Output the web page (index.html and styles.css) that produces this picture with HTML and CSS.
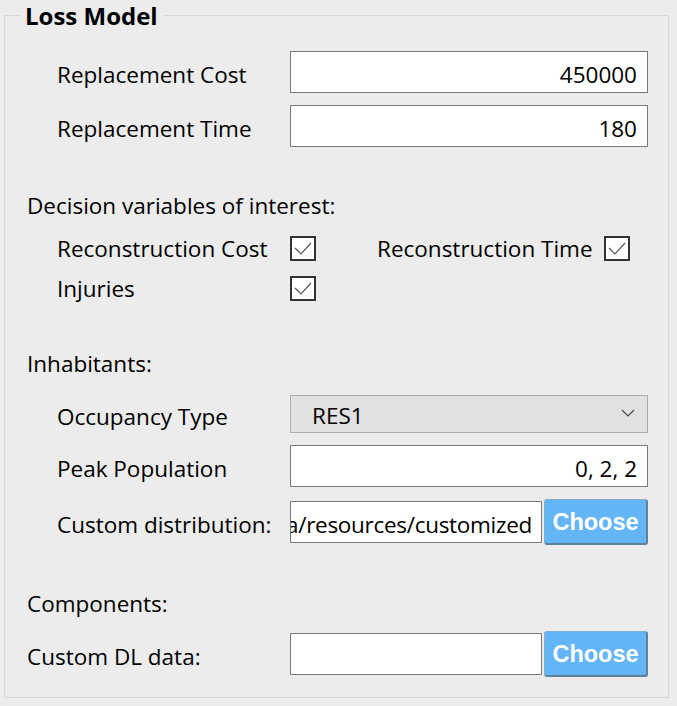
FILE: index.html
```html
<!DOCTYPE html>
<html>
<head>
<meta charset="utf-8">
<link rel="stylesheet" href="styles.css">
</head>
<body>
<div class="group">
  <div class="legend">Loss Model</div>
  <div class="row r1">
    <span class="lbl ind">Replacement Cost</span>
    <div class="field num">450000</div>
  </div>
  <div class="row r2">
    <span class="lbl ind">Replacement Time</span>
    <div class="field num">180</div>
  </div>
  <div class="head h-dec">Decision variables of interest:</div>
  <div class="checks">
    <div class="crow">
      <span class="clbl">Reconstruction Cost</span>
      <span class="cb"><svg width="22" height="21" viewBox="0 0 22 21"><polyline points="3,10 9,16 19,5" fill="none" stroke="#555" stroke-width="1.2"/></svg></span>
      <span class="clbl2">Reconstruction Time</span>
      <span class="cb"><svg width="22" height="21" viewBox="0 0 22 21"><polyline points="3,10 9,16 19,5" fill="none" stroke="#555" stroke-width="1.2"/></svg></span>
    </div>
    <div class="crow">
      <span class="clbl">Injuries</span>
      <span class="cb"><svg width="22" height="21" viewBox="0 0 22 21"><polyline points="3,10 9,16 19,5" fill="none" stroke="#555" stroke-width="1.2"/></svg></span>
    </div>
  </div>
  <div class="head h-inh">Inhabitants:</div>
  <div class="row r3">
    <span class="lbl ind">Occupancy Type</span>
    <div class="combo"><span>RES1</span><svg width="14" height="8" viewBox="0 0 14 8"><polyline points="1,1 7,7 13,1" fill="none" stroke="#444" stroke-width="1.1"/></svg></div>
  </div>
  <div class="row r4">
    <span class="lbl ind">Peak Population</span>
    <div class="field num">0, 2, 2</div>
  </div>
  <div class="row r5">
    <span class="lbl ind">Custom distribution:</span>
    <div class="field short path"><span>a/resources/customized</span></div>
    <button class="btn">Choose</button>
  </div>
  <div class="head h-comp">Components:</div>
  <div class="row r6">
    <span class="lbl">Custom DL data:</span>
    <div class="field short"></div>
    <button class="btn">Choose</button>
  </div>
</div>
</body>
</html>
```
FILE: styles.css
```css
html, body {
  margin: 0;
  padding: 0;
  background: #ececec;
}
body {
  font-family: "Open Sans", "Noto Sans", sans-serif;
  font-size: 22.5px;
  color: #000;
  width: 677px;
  height: 706px;
  overflow: hidden;
}
.group {
  margin: 15px 0 0 4px;
  width: 665px;
  height: 683px;
  border: 1px solid #d8d8d8;
  box-sizing: border-box;
}
.legend {
  margin: -13px 0 0 15px;
  padding: 0 5px;
  width: max-content;
  background: #ececec;
  font-weight: bold;
  font-size: 24px;
  line-height: 26px;
  height: 26px;
}
.row {
  display: flex;
  align-items: center;
  padding-left: 22px;
}
.lbl {
  width: 263px;
  flex: none;
  padding-top: 4px;
}
.lbl.ind {
  padding-left: 30px;
  width: 233px;
}
.field {
  width: 358px;
  height: 42px;
  box-sizing: border-box;
  border: 1px solid #7a7a7a;
  background: #fff;
  display: flex;
  align-items: center;
  padding: 4px 10px 0;
  white-space: nowrap;
  overflow: hidden;
  flex: none;
}
.field.num {
  justify-content: flex-end;
}
.field.short {
  width: 252px;
}
.field.path {
  justify-content: flex-end;
  padding: 4px 9px 0 0;
}
.field.path span {
  flex: none;
  letter-spacing: -0.3px;
}
.r1 { margin-top: 22px; }
.r2 { margin-top: 12px; }
.head {
  padding-left: 22px;
  line-height: 30px;
}
.h-dec { margin-top: 44px; }
.checks {
  padding-left: 52px;
  margin-top: 15px;
  display: flex;
  flex-direction: column;
  gap: 15px;
}
.crow {
  display: flex;
  align-items: center;
  height: 25px;
}
.clbl {
  width: 233px;
  flex: none;
}
.clbl2 {
  margin-left: 61px;
  width: 227px;
  flex: none;
}
.cb {
  width: 26px;
  height: 25px;
  box-sizing: border-box;
  border: 2px solid #333;
  background: #fff;
  display: flex;
  align-items: center;
  justify-content: center;
  flex: none;
}
.h-inh { margin-top: 48px; }
.r3 { margin-top: 16px; }
.combo {
  width: 358px;
  height: 38px;
  box-sizing: border-box;
  border: 1px solid #adadad;
  background: #e1e1e1;
  display: flex;
  align-items: center;
  justify-content: space-between;
  padding: 2px 12px 0 21px;
  flex: none;
}
.combo svg {
  margin-top: -4px;
}
.r4 { margin-top: 12px; }
.r5 { margin-top: 12px; }
.btn {
  margin-left: 2px;
  width: 104px;
  height: 46px;
  box-sizing: border-box;
  border: 1px solid #7fb0d0;
  border-right: 2px solid #5d8199;
  border-bottom: 2px solid #5d8199;
  border-radius: 3px;
  background: #64b5f6;
  color: #fff;
  font-family: "Liberation Sans", Arial, sans-serif;
  font-weight: bold;
  font-size: 23.5px;
  padding: 2px 0 0;
  flex: none;
}
.h-comp { margin-top: 44px; }
.r6 { margin-top: 12px; }
```
